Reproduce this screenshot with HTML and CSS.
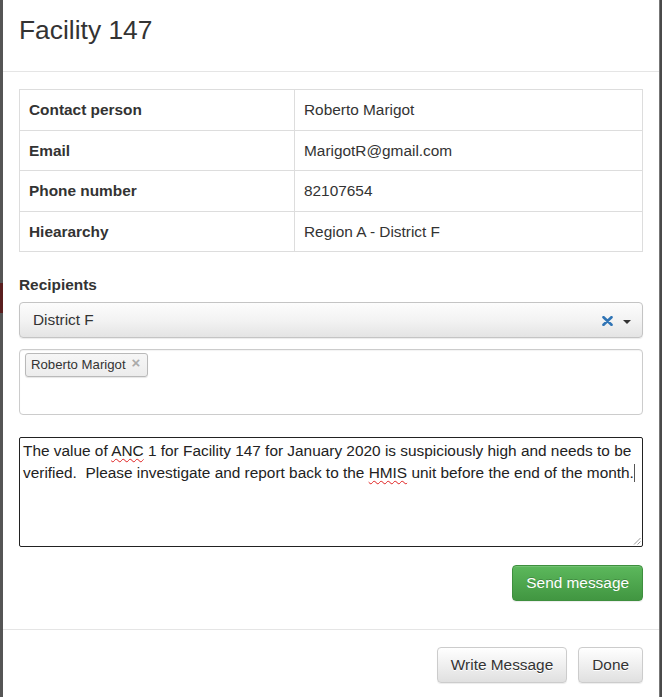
FILE: index.html
```html
<!DOCTYPE html>
<html lang="en">
<head>
<meta charset="utf-8">
<title>Facility 147</title>
<link rel="stylesheet" href="styles.css">
</head>
<body>
<div class="page">
  <div class="edge-left">
    <div class="edge-gap"></div>
    <div class="edge-red"></div>
  </div>
  <div class="modal">
    <div class="modal-header">
      <h3 class="modal-title">Facility 147</h3>
    </div>
    <div class="modal-body">
      <table class="info">
        <tr><th>Contact person</th><td>Roberto Marigot</td></tr>
        <tr><th>Email</th><td>MarigotR@gmail.com</td></tr>
        <tr><th>Phone number</th><td>82107654</td></tr>
        <tr><th>Hieararchy</th><td>Region A - District F</td></tr>
      </table>
      <label class="lbl">Recipients</label>
      <div class="select">
        <span class="select-text">District F</span>
        <svg class="select-clear" width="11" height="10" viewBox="0 0 11 10"><path d="M1.5 1.2 L9.5 8.8 M9.5 1.2 L1.5 8.8" stroke="#2f74b5" stroke-width="2.6" stroke-linecap="round"/></svg>
        <span class="select-caret"></span>
      </div>
      <div class="tags">
        <span class="tag">Roberto Marigot<span class="tag-x">×</span></span>
      </div>
      <div class="msg">The value of <span class="sp">ANC</span> 1 for Facility 147 for January 2020 is suspiciously high and needs to be verified.  Please investigate and report back to the <span class="sp">HMIS</span> unit before the end of the month.<span class="caret"></span><svg class="grip" width="8" height="8" viewBox="0 0 8 8"><path d="M7.5 1 L1 7.5 M7.5 4.5 L4.5 7.5" stroke="#999" stroke-width="1"/></svg></div>
      <div class="send-row">
        <button class="btn btn-success">Send message</button>
      </div>
    </div>
    <div class="modal-footer">
      <button class="btn btn-default">Write Message</button>
      <button class="btn btn-default">Done</button>
    </div>
  </div>
  <div class="edge-right"></div>
</div>
</body>
</html>
```

FILE: styles.css
```css
* { box-sizing: border-box; }
html, body {
  margin: 0;
  padding: 0;
  background: #4f4f4f;
  overflow: hidden;
}
body {
  font-family: "Liberation Sans", Arial, sans-serif;
  font-size: 15.4px;
  line-height: 22px;
  color: #333;
}
.page {
  display: flex;
  width: 662px;
  height: 697px;
  overflow: hidden;
}
.edge-left {
  width: 3px;
  flex: none;
  background: #555;
  display: flex;
  flex-direction: column;
}
.edge-gap { height: 283px; }
.edge-red { height: 30px; background: #5a1f1f; }
.edge-right {
  width: 2px;
  flex: none;
  background: #4a4a4a;
}
.modal {
  width: 657px;
  flex: none;
  background: #fff;
  border-right: 1px solid #777;
}
.modal-header {
  padding: 16px 16px 26px;
  border-bottom: 1px solid #e5e5e5;
}
.modal-title {
  margin: 0;
  font-size: 26.4px;
  line-height: 29px;
  font-weight: 400;
  color: #333;
}
.modal-body {
  padding: 17px 16px 28px 16px;
  width: 656px;
}
.info {
  width: 624px;
  border-collapse: collapse;
  margin-bottom: 22px;
}
.info th, .info td {
  border: 1px solid #ddd;
  padding: 9px 9px;
  line-height: 21.6px;
  text-align: left;
  vertical-align: middle;
}
.info th {
  width: 275px;
  font-weight: 700;
}
.lbl {
  display: block;
  font-weight: 700;
  margin-bottom: 6px;
}
.select {
  width: 624px;
  height: 36px;
  display: flex;
  align-items: center;
  padding: 0 11px 0 13px;
  border: 1px solid #c4c4c4;
  border-radius: 4px;
  background: linear-gradient(to bottom, #fcfcfc 0%, #f3f3f3 50%, #e4e4e4 100%);
  box-shadow: 0 1px 1px rgba(0,0,0,0.08);
}
.select-text { flex: 1; color: #333; }
.select-clear { display: block; margin-right: 10px; margin-top: 1px; }
.select-caret {
  width: 0;
  height: 0;
  border-left: 4.5px solid transparent;
  border-right: 4.5px solid transparent;
  border-top: 4.5px solid #333;
  margin-top: 3px;
}
.tags {
  width: 624px;
  height: 66px;
  margin-top: 11px;
  padding: 3px 5px;
  border: 1px solid #ccc;
  border-radius: 4px;
  background: #fff;
  box-shadow: inset 0 1px 1px rgba(0,0,0,0.05);
}
.tag {
  display: inline-flex;
  align-items: center;
  height: 24px;
  padding: 0 7px 0 5px;
  font-size: 13.2px;
  line-height: 22px;
  color: #333;
  border: 1px solid #b9b9b9;
  border-radius: 3px;
  background: linear-gradient(to bottom, #f6f6f6 0%, #ececec 100%);
  box-shadow: 0 1px 1px rgba(0,0,0,0.1);
}
.tag-x {
  margin-left: 6px;
  color: #aaa;
  font-weight: 700;
  font-size: 15px;
  line-height: 16px;
  margin-top: -4px;
}
.msg {
  position: relative;
  width: 624px;
  height: 110px;
  margin-top: 22px;
  padding: 2px 3px;
  border: 1px solid #222;
  border-radius: 2px;
  line-height: 22px;
  color: #222;
  white-space: pre-wrap;
}
.sp {
  text-decoration: underline wavy #e02020;
  text-decoration-thickness: 1px;
  text-underline-offset: 2px;
}
.caret {
  display: inline-block;
  width: 0;
  height: 18px;
  border-left: 1px solid #555;
  vertical-align: -4px;
}
.grip {
  position: absolute;
  right: 1px;
  bottom: 1px;
}
.send-row {
  display: flex;
  justify-content: flex-end;
  margin-top: 18px;
}
.btn {
  font-family: "Liberation Sans", Arial, sans-serif;
  font-size: 15.4px;
  line-height: 22px;
  height: 36px;
  padding: 6px 13px;
  border-radius: 4px;
  border: 1px solid #ccc;
  cursor: pointer;
}
.btn-success {
  color: #fff;
  background: linear-gradient(to bottom, #5cb85c 0%, #419641 100%);
  border-color: #3e8f3e;
  text-shadow: 0 -1px 0 rgba(0,0,0,0.2);
  box-shadow: inset 0 1px 0 rgba(255,255,255,0.15), 0 1px 1px rgba(0,0,0,0.075);
}
.btn-default {
  color: #333;
  background: linear-gradient(to bottom, #fff 0%, #e0e0e0 100%);
  border-color: #ccc;
  text-shadow: 0 1px 0 #fff;
  box-shadow: inset 0 1px 0 rgba(255,255,255,0.15), 0 1px 1px rgba(0,0,0,0.075);
}
.modal-footer {
  width: 656px;
  display: flex;
  justify-content: flex-end;
  gap: 11px;
  padding: 17px 16px 17px 16px;
  border-top: 1px solid #e5e5e5;
}
```
